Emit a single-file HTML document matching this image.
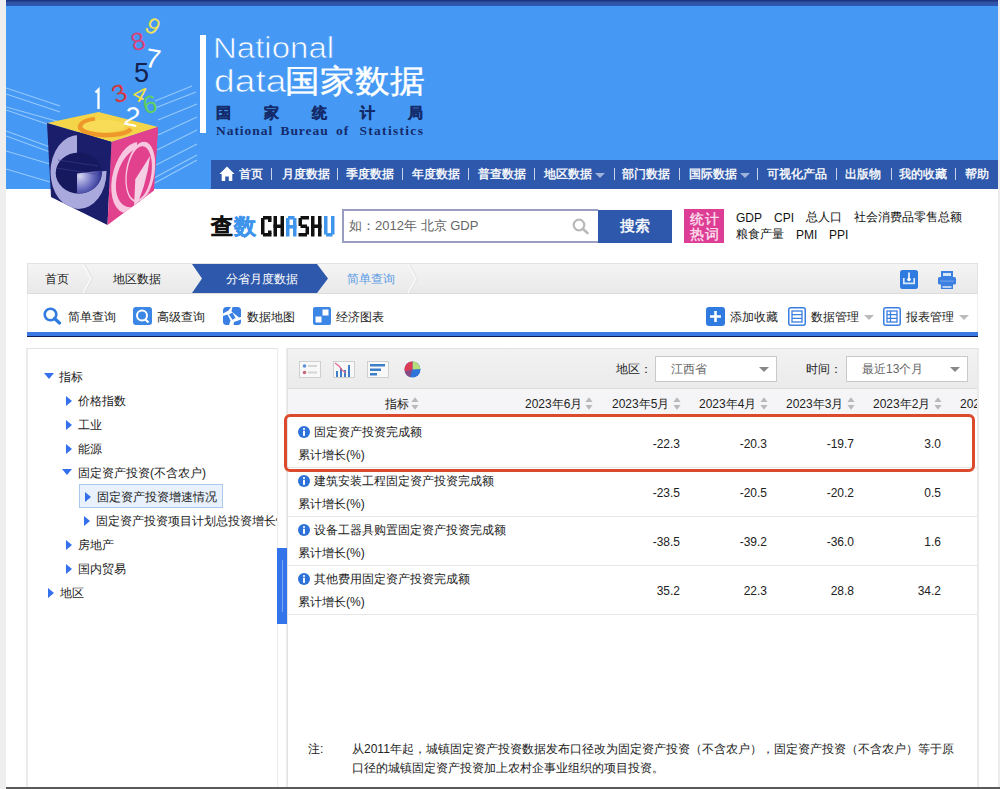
<!DOCTYPE html>
<html><head><meta charset="utf-8">
<style>
@font-face{font-family:"Liberation Sans Wide";src:local("Liberation Sans");unicode-range:U+2E80-9FFF,U+F900-FAFF,U+FE30-FE4F,U+FF00-FFEF;size-adjust:133.33%}
*{margin:0;padding:0;box-sizing:border-box}
html,body{width:1000px;height:789px;overflow:hidden;background:#fff;font-family:"Liberation Sans Wide","Liberation Sans",sans-serif;color:#222}
.a{position:absolute}
#strip{left:0;top:0;width:6px;height:789px;background:#eeeeee}
#topbar{left:6px;top:0;width:992px;height:6px;background:linear-gradient(#1d3583 0,#1d3583 17%,#3253a6 34%,#2e54aa 70%,#2a5ab8 100%)}
#rstrip{left:998px;top:0;width:2px;height:789px;background:#ececec}
#hdr{left:6px;top:6px;width:992px;height:183px;background:#4599f5;overflow:hidden}
#nav{left:211px;top:160px;width:787px;height:29px;background:#2e58ab;color:#fff;font-size:12px;font-weight:500}
#nav span{position:absolute;top:7px;line-height:15px;white-space:nowrap;-webkit-text-stroke:0.35px #fff}
#nav i{position:absolute;top:8px;width:1px;height:12px;background:#c8d3ea}
#nav b.car{position:absolute;top:13px;width:0;height:0;border-left:5px solid transparent;border-right:5px solid transparent;border-top:5px solid #9fb3dc}
.t{position:absolute;white-space:nowrap;line-height:1}
</style></head><body>
<div id="strip" class="a"></div>
<div id="topbar" class="a"></div>
<div id="rstrip" class="a"></div>
<div id="hdr" class="a"></div>
<svg class="a" style="left:0;top:0" width="1000" height="240" viewBox="0 0 1000 240">
 <defs>
  <radialGradient id="gr" cx="80" cy="176" r="24" gradientUnits="userSpaceOnUse"><stop offset="0" stop-color="#d6d6f2"/><stop offset=".55" stop-color="#6a6cc0"/><stop offset="1" stop-color="#1f2380"/></radialGradient>
  <clipPath id="hc"><rect x="6" y="5" width="994" height="184"/></clipPath>
  <clipPath id="lf"><polygon points="47,123 111.5,142 107.5,225 51,197"/></clipPath>
  <clipPath id="rf"><polygon points="111.5,142 158,127 154,190.5 107.5,225"/></clipPath>
  <clipPath id="tf"><polygon points="47,123 98.5,112 158,127 111.5,142"/></clipPath>
 </defs>
 <g clip-path="url(#hc)" stroke="#b8ddff" stroke-opacity="0.7" stroke-width="1.1">
  <line x1="6" y1="88" x2="60" y2="106"/>
  <line x1="6" y1="94" x2="60" y2="112"/>
  <line x1="6" y1="107" x2="60" y2="122"/>
  <line x1="6" y1="110" x2="50" y2="125"/>
  <line x1="6" y1="131" x2="50" y2="147"/>
  <line x1="6" y1="136" x2="50" y2="152"/>
  <line x1="6" y1="151" x2="50" y2="164"/>
  <line x1="6" y1="169" x2="50" y2="182"/>
  <line x1="155" y1="101" x2="192" y2="86"/>
  <line x1="155" y1="108" x2="196" y2="92"/>
  <line x1="158" y1="120" x2="197" y2="104"/>
  <line x1="158" y1="135" x2="197" y2="117"/>
  <line x1="157" y1="150" x2="197" y2="130"/>
  <line x1="156" y1="165" x2="197" y2="144"/>
  <line x1="154" y1="178" x2="197" y2="155"/>
  <line x1="153" y1="184" x2="197" y2="160"/>
 </g>
 <polygon points="47,123 98.5,112 158,127 111.5,142" fill="#f4d449"/>
 <g clip-path="url(#tf)">
  <path d="M95,119 A26,8.5 0 1 0 131,129" fill="none" stroke="#ee982c" stroke-width="4.5"/>
  <ellipse cx="104" cy="126" rx="21" ry="6" fill="#f8dc58"/>
 </g>
 <polygon points="47,123 111.5,142 107.5,225 51,197" fill="#1b1e6a"/>
 <g clip-path="url(#lf)">
  <ellipse cx="78.5" cy="172" rx="28" ry="37" fill="#a9a9de"/>
  <polygon points="77,128 115,128 115,170 77,174" fill="#1b1e6a"/>
  <ellipse cx="78.7" cy="173" rx="23" ry="20.5" fill="#17195f"/>
  <path d="M77,173.5 L101.6,170.5 A23,20.5 0 0 1 77,193.5 Z" fill="url(#gr)"/>
  <path d="M58,160 L98,166 M56,168 L96,174" stroke="#3a3d8a" stroke-width="1.2" opacity=".6"/>
 </g>
 <polygon points="111.5,142 158,127 154,190.5 107.5,225" fill="#e2418d"/>
 <g clip-path="url(#rf)">
  <g transform="matrix(46.5,-15,-4,83,111.5,142)">
   <ellipse cx=".5" cy=".52" rx=".46" ry=".42" fill="#f7c6e0"/>
   <ellipse cx=".56" cy=".53" rx=".42" ry=".35" fill="#e2418d"/>
   <polygon points=".56,0 1.1,0 1.1,.47 .56,.47" fill="#e2418d"/>
   <ellipse cx=".66" cy=".48" rx=".32" ry=".36" fill="#f7c6e0"/>
   <ellipse cx=".64" cy=".49" rx=".27" ry=".32" fill="#e2418d"/>
   <path d="M.56,.93 L.56,.55 L.86,.32 Q.8,.7 .56,.93 Z" fill="#f5cfe4"/>
  </g>
 </g>
 <g font-family="Liberation Sans, sans-serif" text-anchor="middle" dominant-baseline="central">
  <path d="M95.5,92.5 L98.5,89.5 L98.5,109" fill="none" stroke="#fff" stroke-width="2.3"/>
  <text x="119" y="93" font-size="25" fill="#d6363f" transform="rotate(-22 119 93)">3</text>
  <text x="140" y="94" font-size="22" fill="#f3e143" transform="rotate(28 140 94)">4</text>
  <text x="150" y="104" font-size="25" fill="#62d05e" transform="rotate(-12 150 104)">6</text>
  <text x="132" y="117" font-size="27" fill="#fff" transform="rotate(12 132 117)">2</text>
  <text x="141.5" y="73" font-size="27" fill="#14204e">5</text>
  <text x="153" y="59" font-size="27" fill="#fff" transform="rotate(10 153 59)">7</text>
  <text x="138" y="41" font-size="25" fill="#d8427c" transform="rotate(-15 138 41)">8</text>
  <text x="153" y="26" font-size="23" fill="#f0e35a" transform="rotate(32 153 26)">9</text>
 </g>
</svg>
<div class="a" style="left:200px;top:35px;width:6px;height:98px;background:#fff"></div>
<div class="t" style="left:213px;top:33px;font-size:30px;color:#fff;-webkit-text-stroke:0.7px #4599f5;transform-origin:0 0;transform:scaleX(1.10)">National</div>
<div class="t" style="left:214px;top:66px;font-size:31px;color:#fff;-webkit-text-stroke:0.7px #4599f5;transform-origin:0 0;transform:scaleX(1.2)">data</div>
<div class="t" style="left:285px;top:64px;font-size:35px;color:#fff;-webkit-text-stroke:0.4px #fff;transform-origin:0 0;transform:scaleY(.92)">国家数据</div>
<div class="t" style="left:216px;top:105px;font-size:15px;color:#142b6b;font-weight:bold;-webkit-text-stroke:0.4px #142b6b;letter-spacing:33px">国家统计局</div>
<div class="t" style="left:216px;top:123px;font-size:13.5px;color:#142b6b;font-weight:bold;font-family:'Liberation Serif',serif;letter-spacing:0.95px;word-spacing:3px;top:124px">National Bureau of <span style="margin-left:3px;letter-spacing:1.3px">Statistics</span></div>

<div id="nav" class="a"><svg style="position:absolute;left:8px;top:6px" width="16" height="16" viewBox="0 0 16 16"><path d="M8,0.5 L15.5,8 L13.3,8 L13.3,15 L9.8,15 L9.8,10.5 L6.2,10.5 L6.2,15 L2.7,15 L2.7,8 L0.5,8 Z" fill="#fff"/></svg><span style="left:28px">首页</span><span style="left:71px">月度数据</span><span style="left:135px">季度数据</span><span style="left:201px">年度数据</span><span style="left:267px">普查数据</span><span style="left:333px">地区数据</span><span style="left:411px">部门数据</span><span style="left:478px">国际数据</span><span style="left:556px">可视化产品</span><span style="left:634px">出版物</span><span style="left:688px">我的收藏</span><span style="left:754px">帮助</span><i style="left:60px"></i><i style="left:126px"></i><i style="left:191px"></i><i style="left:257px"></i><i style="left:323px"></i><i style="left:403px"></i><i style="left:468px"></i><i style="left:546px"></i><i style="left:625px"></i><i style="left:680px"></i><i style="left:744px"></i><b class="car" style="left:384px"></b><b class="car" style="left:529px"></b></div>

<!-- search row -->
<div class="t" style="left:211px;top:216px;font-size:22px;font-weight:900;color:#111;-webkit-text-stroke:0.5px #111">查</div>
<div class="t" style="left:234px;top:216px;font-size:22px;font-weight:900;color:#3f94ec;-webkit-text-stroke:0.5px #3f94ec">数</div>
<svg class="a" style="left:261px;top:216px" width="75" height="22" viewBox="0 0 75 22">
 <g fill="#111">
  <rect x="2" y="0" width="8.5" height="3.5"/><rect x="0" y="2" width="3.5" height="16.5"/><rect x="2" y="17" width="8.5" height="3.5"/><rect x="7" y="2.5" width="3.5" height="3.5"/><rect x="7" y="14.5" width="3.5" height="3.5"/>
 </g>
 <g fill="#111" transform="translate(12.5 0)"><rect x="0" y="0" width="3.5" height="20.5"/><rect x="7" y="0" width="3.5" height="20.5"/><rect x="0" y="8.5" width="10.5" height="3.5"/></g>
 <g fill="#3f94ec" transform="translate(25 0)"><rect x="2" y="0" width="6.5" height="3.5"/><rect x="0" y="2" width="3.5" height="18.5"/><rect x="7" y="2" width="3.5" height="18.5"/><rect x="0" y="9" width="10.5" height="3.5"/></g>
 <g fill="#111" transform="translate(37.5 0)"><rect x="2" y="0" width="8.5" height="3.5"/><rect x="0" y="2" width="3.5" height="8"/><rect x="2" y="8.5" width="6.5" height="3.5"/><rect x="7" y="10.5" width="3.5" height="8"/><rect x="0" y="17" width="8.5" height="3.5"/></g>
 <g fill="#111" transform="translate(50 0)"><rect x="0" y="0" width="3.5" height="20.5"/><rect x="7" y="0" width="3.5" height="20.5"/><rect x="0" y="8.5" width="10.5" height="3.5"/></g>
 <g fill="#3f94ec" transform="translate(63 0)"><rect x="0" y="0" width="3.5" height="18.5"/><rect x="7" y="0" width="3.5" height="18.5"/><rect x="2" y="17" width="6.5" height="3.5"/></g>
</svg>
<div class="a" style="left:342px;top:209px;width:256px;height:34px;border:2px solid #9a9dc2;border-right:none;background:#fff"></div>
<div class="t" style="left:349px;top:219px;font-size:13px;color:#666">如：2012年 北京 GDP</div>
<svg class="a" style="left:572px;top:218px" width="18" height="17" viewBox="0 0 18 17"><circle cx="7" cy="7" r="5.3" fill="none" stroke="#b9b9b9" stroke-width="2.2"/><line x1="10.8" y1="10.8" x2="15.5" y2="15" stroke="#b9b9b9" stroke-width="2.6" stroke-linecap="round"/></svg>
<div class="a" style="left:598px;top:210px;width:74px;height:33px;background:#2e58ab"></div>
<div class="t" style="left:620px;top:218px;font-size:15px;color:#fff;-webkit-text-stroke:0.4px #fff">搜索</div>
<div class="a" style="left:684px;top:209px;width:40px;height:34px;background:#dd3d95"></div>
<div class="t" style="left:690px;top:212px;font-size:14px;line-height:15px;color:#fde3f0;-webkit-text-stroke:0.3px #fde3f0;letter-spacing:1px;white-space:normal;width:32px">统计<br>热词</div>
<div class="t" style="left:736px;top:212px;font-size:12px;color:#111">GDP</div>
<div class="t" style="left:774px;top:212px;font-size:12px;color:#111">CPI</div>
<div class="t" style="left:806px;top:211px;font-size:12px;color:#111">总人口</div>
<div class="t" style="left:854px;top:211px;font-size:12px;color:#111">社会消费品零售总额</div>
<div class="t" style="left:736px;top:228px;font-size:12px;color:#111">粮食产量</div>
<div class="t" style="left:796px;top:229px;font-size:12px;color:#111">PMI</div>
<div class="t" style="left:829px;top:229px;font-size:12px;color:#111">PPI</div>

<!-- breadcrumb -->
<div class="a" style="left:27px;top:263px;width:951px;height:31px;background:linear-gradient(#f4f4f4,#e9e9e9);border:1px solid #e2e2e2;border-bottom:1px solid #dcdcdc"></div>
<svg class="a" style="left:27px;top:263px" width="951" height="31" viewBox="0 0 951 31">
 <polyline points="56,1 64,15.5 56,30" fill="none" stroke="#fafafa" stroke-width="1.5"/>
 <polyline points="57.5,1 65.5,15.5 57.5,30" fill="none" stroke="#e2e2e2" stroke-width="1"/>
 <polygon points="165,1 290,1 301,15.5 290,30 165,30 175,15.5" fill="#2e58ab"/>
 <polyline points="381,1 389,15.5 381,30" fill="none" stroke="#fafafa" stroke-width="1.5"/>
 <polyline points="382.5,1 390.5,15.5 382.5,30" fill="none" stroke="#e2e2e2" stroke-width="1"/>
</svg>
<div class="t" style="left:45px;top:273px;font-size:12px;color:#222;">首页</div>
<div class="t" style="left:113px;top:273px;font-size:12px;color:#222;">地区数据</div>
<div class="t" style="left:226px;top:273px;font-size:12px;color:#fff;">分省月度数据</div>
<div class="t" style="left:347px;top:273px;font-size:12px;color:#5a9be6;">简单查询</div>
<svg class="a" style="left:900px;top:270px" width="18" height="19" viewBox="0 0 18 19"><rect x="0" y="0" width="18" height="19" rx="2.5" fill="#2f7be0"/><path d="M9,2.5 V9.5" stroke="#fff" stroke-width="1.6"/><circle cx="9" cy="9.5" r="1.8" fill="#fff"/><path d="M3.8,8 V13.3 H14.2 V8" fill="none" stroke="#dbe9fb" stroke-width="1.7"/></svg>
<svg class="a" style="left:938px;top:271px" width="18" height="18" viewBox="0 0 18 18"><rect x="3" y="0" width="12" height="6" fill="#3b7fe0"/><rect x="5" y="2" width="8" height="3" fill="#d6e6fb"/><rect x="0" y="6" width="18" height="7.5" rx="1.5" fill="#3b7fe0"/><rect x="2" y="9.5" width="14" height="1.3" fill="#6a9fea"/><rect x="3" y="13" width="12" height="5" fill="#3b7fe0"/><rect x="4.5" y="15.2" width="9" height="1.6" fill="#d6e6fb"/></svg>

<!-- toolbar -->
<div class="a" style="left:27px;top:294px;width:951px;height:38px;background:#fff;border-left:1px solid #f0f0f0;border-right:1px solid #f0f0f0"></div>
<svg class="a" style="left:43px;top:307px" width="19" height="18" viewBox="0 0 19 18"><circle cx="7.5" cy="7.5" r="5.8" fill="none" stroke="#2f7be0" stroke-width="2.6"/><line x1="11.5" y1="11.5" x2="16.5" y2="16" stroke="#2f7be0" stroke-width="3.2" stroke-linecap="round"/></svg>
<div class="t" style="left:68px;top:311px;font-size:12px;color:#222;">简单查询</div>
<svg class="a" style="left:133px;top:307px" width="19" height="18" viewBox="0 0 19 18"><rect width="19" height="18" rx="3" fill="#3c86e6"/><circle cx="9" cy="8.5" r="5" fill="none" stroke="#fff" stroke-width="2"/><line x1="12" y1="12" x2="15.5" y2="15.5" stroke="#fff" stroke-width="2.2"/></svg>
<div class="t" style="left:157px;top:311px;font-size:12px;color:#222;">高级查询</div>
<svg class="a" style="left:223px;top:307px" width="18" height="18" viewBox="0 0 18 18"><defs><clipPath id="mapc"><rect width="18" height="18" rx="3.5"/></clipPath></defs><g clip-path="url(#mapc)" fill="#3a7fe4"><polygon points="0,0 8,0 5.5,3.5 0,6.5"/><polygon points="9.5,0 18,0 18,10 16,10.5 8.5,4.5"/><polygon points="6,7.5 9.5,5.5 12.5,11 9.5,12.7"/><polygon points="0,9 4.5,7.5 7.5,13.5 6,18 0,18"/><polygon points="11,15 18,12.5 18,18 10.5,18"/></g></svg>
<div class="t" style="left:247px;top:311px;font-size:12px;color:#222;">数据地图</div>
<svg class="a" style="left:313px;top:307px" width="18" height="18" viewBox="0 0 18 18"><rect width="18" height="18" rx="2" fill="#3c86e6"/><rect x="9.5" y="2.5" width="6" height="6" fill="#fff"/><rect x="2.5" y="9.5" width="6" height="6" fill="#fff"/></svg>
<div class="t" style="left:336px;top:311px;font-size:12px;color:#222;">经济图表</div>
<svg class="a" style="left:706px;top:307px" width="19" height="19" viewBox="0 0 19 19"><rect width="19" height="19" rx="3" fill="#2f7be0"/><path d="M9.5,4 V15 M4,9.5 H15" stroke="#fff" stroke-width="2.6"/></svg>
<div class="t" style="left:730px;top:311px;font-size:12px;color:#222;">添加收藏</div>
<svg class="a" style="left:788px;top:307px" width="18" height="19" viewBox="0 0 18 19"><rect x="0.75" y="0.75" width="16.5" height="17.5" rx="2" fill="#fff" stroke="#3b7fe0" stroke-width="1.5"/><rect x="4" y="4" width="10" height="11" fill="none" stroke="#3b7fe0" stroke-width="1.3"/><path d="M4,7.7 H14 M4,11.3 H14" stroke="#3b7fe0" stroke-width="1.3"/></svg>
<div class="t" style="left:811px;top:311px;font-size:12px;color:#222;">数据管理</div>
<b class="a" style="left:864px;top:315px;border-left:5px solid transparent;border-right:5px solid transparent;border-top:5px solid #bbb"></b>
<svg class="a" style="left:883px;top:307px" width="18" height="19" viewBox="0 0 18 19"><rect x="0.75" y="0.75" width="16.5" height="17.5" rx="2" fill="#fff" stroke="#3b7fe0" stroke-width="1.5"/><rect x="4" y="4" width="10" height="11" fill="none" stroke="#3b7fe0" stroke-width="1.3"/><path d="M4,7.7 H14 M4,11.3 H14 M7.5,4 V15" stroke="#3b7fe0" stroke-width="1.3"/></svg>
<div class="t" style="left:906px;top:311px;font-size:12px;color:#222;">报表管理</div>
<b class="a" style="left:959px;top:315px;border-left:5px solid transparent;border-right:5px solid transparent;border-top:5px solid #bbb"></b>
<div class="a" style="left:27px;top:332px;width:951px;height:4px;background:#3a78e2"></div>
<div class="a" style="left:27px;top:336px;width:951px;height:1px;background:#0c1f55"></div>

<!-- left panel -->
<div class="a" style="left:26px;top:348px;width:252px;height:445px;border:1px solid #e3e3e3;border-left:2px solid #ebebeb;border-right:none;background:#fff"></div>
<div class="a" style="left:277px;top:348px;width:10px;height:445px;background:#fff;border-left:1px solid #ececec;border-right:1px solid #ececec"></div>
<div class="a" style="left:277px;top:548px;width:10px;height:76px;background:#3474ea"></div>
<div class="a" style="left:282px;top:560px;width:1px;height:52px;background:#7aa8f4"></div>
<div class="a" style="left:79px;top:484px;width:144px;height:24px;background:#e8f1fc;border:1px solid #a9c8ee"></div><div class="a" style="left:27px;top:349px;width:250px;height:440px;overflow:hidden"><b class="a" style="left:17px;top:24px;border-left:5.5px solid transparent;border-right:5.5px solid transparent;border-top:6px solid #3470ee"></b><div class="t" style="left:32px;top:22px;font-size:12px;color:#222;">指标</div><b class="a" style="left:39px;top:47px;border-top:5px solid transparent;border-bottom:5px solid transparent;border-left:6px solid #3470ee"></b><div class="t" style="left:51px;top:46px;font-size:12px;color:#222;">价格指数</div><b class="a" style="left:39px;top:71px;border-top:5px solid transparent;border-bottom:5px solid transparent;border-left:6px solid #3470ee"></b><div class="t" style="left:51px;top:70px;font-size:12px;color:#222;">工业</div><b class="a" style="left:39px;top:95px;border-top:5px solid transparent;border-bottom:5px solid transparent;border-left:6px solid #3470ee"></b><div class="t" style="left:51px;top:94px;font-size:12px;color:#222;">能源</div><b class="a" style="left:35px;top:120px;border-left:5.5px solid transparent;border-right:5.5px solid transparent;border-top:6px solid #3470ee"></b><div class="t" style="left:51px;top:118px;font-size:12px;color:#222;">固定资产投资(不含农户)</div><b class="a" style="left:58px;top:143px;border-top:5px solid transparent;border-bottom:5px solid transparent;border-left:6px solid #3470ee"></b><div class="t" style="left:70px;top:142px;font-size:12px;color:#222;">固定资产投资增速情况</div><b class="a" style="left:57px;top:167px;border-top:5px solid transparent;border-bottom:5px solid transparent;border-left:6px solid #3470ee"></b><div class="t" style="left:69px;top:166px;font-size:12px;color:#222;">固定资产投资项目计划总投资增长情况</div><b class="a" style="left:39px;top:191px;border-top:5px solid transparent;border-bottom:5px solid transparent;border-left:6px solid #3470ee"></b><div class="t" style="left:51px;top:190px;font-size:12px;color:#222;">房地产</div><b class="a" style="left:39px;top:215px;border-top:5px solid transparent;border-bottom:5px solid transparent;border-left:6px solid #3470ee"></b><div class="t" style="left:51px;top:214px;font-size:12px;color:#222;">国内贸易</div><b class="a" style="left:21px;top:239px;border-top:5px solid transparent;border-bottom:5px solid transparent;border-left:6px solid #3470ee"></b><div class="t" style="left:33px;top:238px;font-size:12px;color:#222;">地区</div></div>
<div class="a" style="left:287px;top:348px;width:692px;height:445px;border:1px solid #e3e3e3;border-right:2px solid #ebebeb;background:#fff"></div>
<div class="a" style="left:288px;top:349px;width:689px;height:40px;background:linear-gradient(#f2f2f2,#ebebeb);border-bottom:1px solid #dcdcdc"></div>
<div class="a" style="left:288px;top:389px;width:689px;height:26px;background:#f5f5f7"></div>

<svg class="a" style="left:299px;top:361px" width="22" height="17" viewBox="0 0 22 17"><rect x="0.5" y="0.5" width="21" height="16" fill="#f8f8f8" stroke="#cfcfcf"/><circle cx="5.5" cy="5" r="1.8" fill="#5b8fd6"/><circle cx="5.5" cy="11.5" r="1.8" fill="#c46a7a"/><rect x="9" y="4" width="9" height="2" fill="#d6d6d6"/><rect x="9" y="10.5" width="9" height="2" fill="#d6d6d6"/></svg>
<svg class="a" style="left:333px;top:361px" width="22" height="17" viewBox="0 0 22 17"><rect x="0.5" y="0.5" width="21" height="16" fill="#f8f8f8" stroke="#cfcfcf"/><rect x="3" y="10" width="2" height="6" fill="#3e7fc9"/><rect x="7" y="7" width="2" height="9" fill="#3e7fc9"/><rect x="11" y="9" width="2" height="7" fill="#3e7fc9"/><rect x="15" y="4" width="2" height="12" fill="#3e7fc9"/><polyline points="2,2 6,5 9,9 13,12" fill="none" stroke="#e06a90" stroke-width="1.3"/></svg>
<svg class="a" style="left:367px;top:361px" width="22" height="17" viewBox="0 0 22 17"><rect x="0.5" y="0.5" width="21" height="16" fill="#f8f8f8" stroke="#cfcfcf"/><rect x="3" y="3" width="15" height="2.5" fill="#3e7fc9"/><rect x="3" y="7.5" width="11" height="2.5" fill="#3e7fc9"/><rect x="3" y="12" width="7" height="2.5" fill="#3e7fc9"/></svg>
<svg class="a" style="left:404px;top:361px" width="17" height="17" viewBox="0 0 17 17"><circle cx="8.5" cy="8.5" r="8" fill="#2f74d8"/><path d="M8.5,8.5 L8.5,0.5 A8,8 0 0 1 16.5,8 Z" fill="#b7dc7a"/><path d="M8.5,8.5 L0.8,10.5 A8,8 0 0 1 8.5,0.5 Z" fill="#dd3b55"/><path d="M8.5,8.5 L0.8,10.5 A8,8 0 0 0 6,16.2 Z" fill="#c0304a" opacity="0.6"/></svg>
<div class="t" style="left:616px;top:363px;font-size:12px;color:#222;">地区：</div><div class="a" style="left:655px;top:356px;width:122px;height:26px;background:#fff;border:1px solid #c9c9c9"></div><div class="t" style="left:671px;top:363px;font-size:12px;color:#666;">江西省</div><b class="a" style="left:759px;top:367px;border-left:5px solid transparent;border-right:5px solid transparent;border-top:5px solid #888"></b><div class="t" style="left:806px;top:363px;font-size:12px;color:#222;">时间：</div><div class="a" style="left:846px;top:356px;width:122px;height:26px;background:#fff;border:1px solid #c9c9c9"></div><div class="t" style="left:862px;top:363px;font-size:12px;color:#666;">最近13个月</div><b class="a" style="left:950px;top:367px;border-left:5px solid transparent;border-right:5px solid transparent;border-top:5px solid #888"></b><div class="t" style="left:385px;top:398px;font-size:12px;color:#222">指标</div><svg class="a" style="left:411px;top:397px" width="8" height="13" viewBox="0 0 8 13"><path d="M4,0.3 L7.6,5 H0.4 Z M4,12.7 L7.6,8 H0.4 Z" fill="#b9b9b9"/></svg><div class="t" style="left:525px;top:398px;font-size:12px;color:#222">2023年6月</div><svg class="a" style="left:585px;top:397px" width="8" height="13" viewBox="0 0 8 13"><path d="M4,0.3 L7.6,5 H0.4 Z M4,12.7 L7.6,8 H0.4 Z" fill="#b9b9b9"/></svg><div class="t" style="left:612px;top:398px;font-size:12px;color:#222">2023年5月</div><svg class="a" style="left:673px;top:397px" width="8" height="13" viewBox="0 0 8 13"><path d="M4,0.3 L7.6,5 H0.4 Z M4,12.7 L7.6,8 H0.4 Z" fill="#b9b9b9"/></svg><div class="t" style="left:699px;top:398px;font-size:12px;color:#222">2023年4月</div><svg class="a" style="left:760px;top:397px" width="8" height="13" viewBox="0 0 8 13"><path d="M4,0.3 L7.6,5 H0.4 Z M4,12.7 L7.6,8 H0.4 Z" fill="#b9b9b9"/></svg><div class="t" style="left:786px;top:398px;font-size:12px;color:#222">2023年3月</div><svg class="a" style="left:847px;top:397px" width="8" height="13" viewBox="0 0 8 13"><path d="M4,0.3 L7.6,5 H0.4 Z M4,12.7 L7.6,8 H0.4 Z" fill="#b9b9b9"/></svg><div class="t" style="left:873px;top:398px;font-size:12px;color:#222">2023年2月</div><svg class="a" style="left:934px;top:397px" width="8" height="13" viewBox="0 0 8 13"><path d="M4,0.3 L7.6,5 H0.4 Z M4,12.7 L7.6,8 H0.4 Z" fill="#b9b9b9"/></svg><div class="a" style="left:288px;top:388px;width:689px;height:27px;overflow:hidden;pointer-events:none"><div class="t" style="left:672px;top:10px;font-size:12px;color:#222">2023年1月</div></div><div class="a" style="left:288px;top:467px;width:689px;height:1px;background:#e6e6e6"></div><svg class="a" style="left:298px;top:426px" width="12" height="12" viewBox="0 0 12 12"><circle cx="6" cy="6" r="6" fill="#2d72d9"/><circle cx="6" cy="3" r="1.1" fill="#fff"/><rect x="5" y="4.8" width="2" height="5" fill="#fff"/></svg><div class="t" style="left:314px;top:426px;font-size:12px;color:#222;">固定资产投资完成额</div><div class="t" style="left:298px;top:449px;font-size:12px;color:#222;">累计增长(%)</div><div class="t" style="left:620px;width:60px;text-align:right;top:438px;font-size:12px;color:#222">-22.3</div><div class="t" style="left:707px;width:60px;text-align:right;top:438px;font-size:12px;color:#222">-20.3</div><div class="t" style="left:794px;width:60px;text-align:right;top:438px;font-size:12px;color:#222">-19.7</div><div class="t" style="left:881px;width:60px;text-align:right;top:438px;font-size:12px;color:#222">3.0</div><div class="a" style="left:288px;top:516px;width:689px;height:1px;background:#e6e6e6"></div><svg class="a" style="left:298px;top:475px" width="12" height="12" viewBox="0 0 12 12"><circle cx="6" cy="6" r="6" fill="#2d72d9"/><circle cx="6" cy="3" r="1.1" fill="#fff"/><rect x="5" y="4.8" width="2" height="5" fill="#fff"/></svg><div class="t" style="left:314px;top:475px;font-size:12px;color:#222;">建筑安装工程固定资产投资完成额</div><div class="t" style="left:298px;top:498px;font-size:12px;color:#222;">累计增长(%)</div><div class="t" style="left:620px;width:60px;text-align:right;top:487px;font-size:12px;color:#222">-23.5</div><div class="t" style="left:707px;width:60px;text-align:right;top:487px;font-size:12px;color:#222">-20.5</div><div class="t" style="left:794px;width:60px;text-align:right;top:487px;font-size:12px;color:#222">-20.2</div><div class="t" style="left:881px;width:60px;text-align:right;top:487px;font-size:12px;color:#222">0.5</div><div class="a" style="left:288px;top:565px;width:689px;height:1px;background:#e6e6e6"></div><svg class="a" style="left:298px;top:524px" width="12" height="12" viewBox="0 0 12 12"><circle cx="6" cy="6" r="6" fill="#2d72d9"/><circle cx="6" cy="3" r="1.1" fill="#fff"/><rect x="5" y="4.8" width="2" height="5" fill="#fff"/></svg><div class="t" style="left:314px;top:524px;font-size:12px;color:#222;">设备工器具购置固定资产投资完成额</div><div class="t" style="left:298px;top:547px;font-size:12px;color:#222;">累计增长(%)</div><div class="t" style="left:620px;width:60px;text-align:right;top:536px;font-size:12px;color:#222">-38.5</div><div class="t" style="left:707px;width:60px;text-align:right;top:536px;font-size:12px;color:#222">-39.2</div><div class="t" style="left:794px;width:60px;text-align:right;top:536px;font-size:12px;color:#222">-36.0</div><div class="t" style="left:881px;width:60px;text-align:right;top:536px;font-size:12px;color:#222">1.6</div><div class="a" style="left:288px;top:614px;width:689px;height:1px;background:#e6e6e6"></div><svg class="a" style="left:298px;top:573px" width="12" height="12" viewBox="0 0 12 12"><circle cx="6" cy="6" r="6" fill="#2d72d9"/><circle cx="6" cy="3" r="1.1" fill="#fff"/><rect x="5" y="4.8" width="2" height="5" fill="#fff"/></svg><div class="t" style="left:314px;top:573px;font-size:12px;color:#222;">其他费用固定资产投资完成额</div><div class="t" style="left:298px;top:596px;font-size:12px;color:#222;">累计增长(%)</div><div class="t" style="left:620px;width:60px;text-align:right;top:585px;font-size:12px;color:#222">35.2</div><div class="t" style="left:707px;width:60px;text-align:right;top:585px;font-size:12px;color:#222">22.3</div><div class="t" style="left:794px;width:60px;text-align:right;top:585px;font-size:12px;color:#222">28.8</div><div class="t" style="left:881px;width:60px;text-align:right;top:585px;font-size:12px;color:#222">34.2</div><div class="a" style="left:284px;top:414px;width:691px;height:58px;border:3px solid #dc4a2d;border-radius:6px"></div><div class="t" style="left:308px;top:743px;font-size:12px;color:#222;">注:</div><div class="t" style="left:352px;top:743px;font-size:12px;color:#222;">从2011年起，城镇固定资产投资数据发布口径改为固定资产投资（不含农户），固定资产投资（不含农户）等于原</div><div class="t" style="left:352px;top:762px;font-size:12px;color:#222;">口径的城镇固定资产投资加上农村企事业组织的项目投资。</div><div class="a" style="left:6px;top:787px;width:994px;height:2px;background:#5a5a5a"></div></body></html>
